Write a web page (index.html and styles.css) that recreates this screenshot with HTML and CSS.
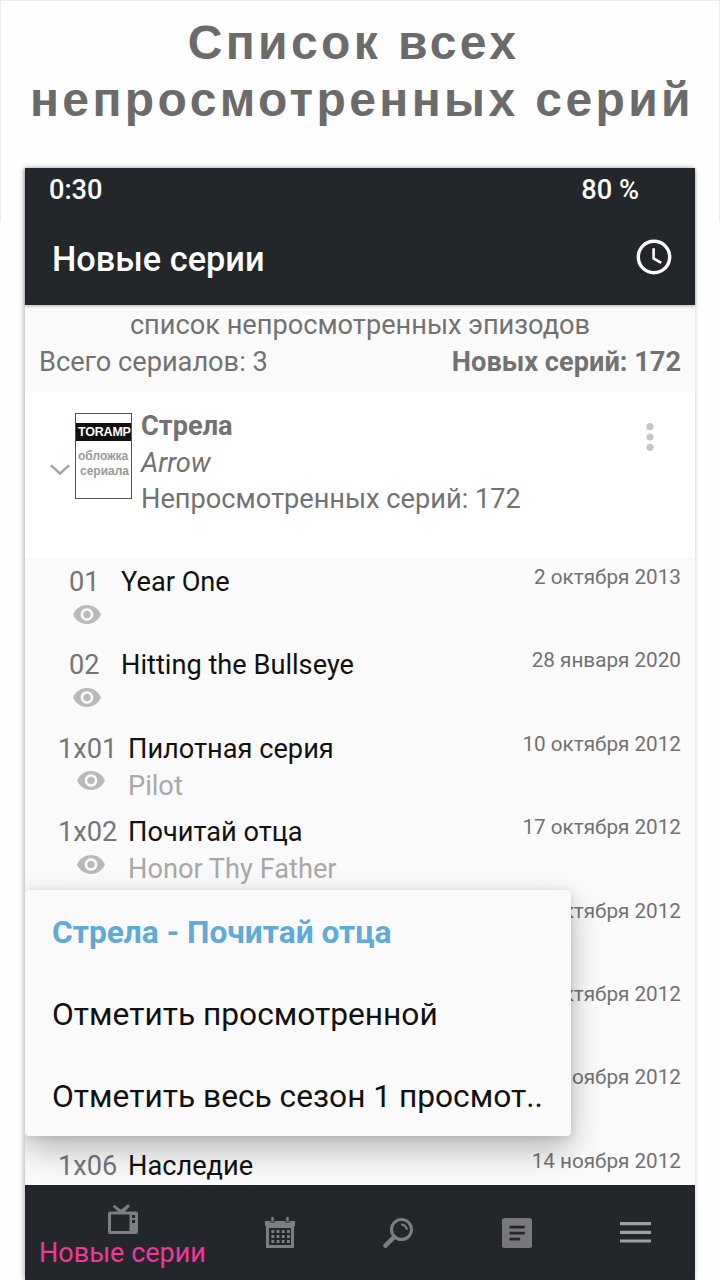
FILE: index.html
```html
<!DOCTYPE html>
<html lang="ru">
<head>
    <meta charset="UTF-8">
    <meta name="viewport" content="width=device-width, initial-scale=1.0">
    <title>Новые серии</title>
    <link rel="stylesheet" href="styles.css">
</head>
<body>
    <div class="frame"></div>
    <h1 class="headline">
        <div class="headline-first">Список всех</div>
        <div class="headline-second">непросмотренных серий</div>
    </h1>

    <div class="phone">
        <header class="header">
            <div class="status-bar">
                <span>0:30</span>
                <span class="battery">80 %</span>
            </div>
            <div class="toolbar">
                <span class="toolbar-title">Новые серии</span>
                <svg class="clock" viewBox="0 0 36 36" fill="none" stroke="#fff">
                    <circle cx="18" cy="18" r="15.7" stroke-width="3.4"/>
                    <path d="M17.6 9.2v10.3l7.6 4.4" stroke-width="2.6"/>
                </svg>
            </div>
        </header>

        <div class="summary">
            <div class="summary-title">список непросмотренных эпизодов</div>
            <div class="summary-row">
                <span>Всего сериалов: 3</span>
                <b>Новых серий: 172</b>
            </div>
        </div>

        <div class="series">
            <svg class="chevron" viewBox="0 0 20 12" fill="none" stroke="#a6a6a6" stroke-width="2.6">
                <path d="M0.8 1.2L10 9.4L19.2 1.2"/>
            </svg>
            <div class="poster">
                <div class="poster-logo">TORAMP</div>
                <div class="poster-text">обложка</div>
                <div class="poster-text poster-text-second">сериала</div>
            </div>
            <div class="series-info">
                <div class="series-name">Стрела</div>
                <div class="series-original">Arrow</div>
                <div class="series-count">Непросмотренных серий: 172</div>
            </div>
            <svg class="more" viewBox="0 0 8 28" fill="#c6c6c6">
                <circle cx="4" cy="3.7" r="3.6"/>
                <circle cx="4" cy="14" r="3.6"/>
                <circle cx="4" cy="24.3" r="3.6"/>
            </svg>
        </div>

        <div class="list">
            <svg width="0" height="0" class="defs">
                <symbol id="eye" viewBox="1 4.5 22 15">
                    <path d="M12 4.5C7 4.5 2.73 7.61 1 12c1.73 4.39 6 7.5 11 7.5s9.27-3.11 11-7.5c-1.73-4.39-6-7.5-11-7.5zM12 17c-2.76 0-5-2.24-5-5s2.24-5 5-5 5 2.24 5 5-2.24 5-5 5zm0-8c-1.66 0-3 1.34-3 3s1.34 3 3 3 3-1.34 3-3-1.34-3-3-3z"/>
                </symbol>
            </svg>
            <div class="episode special">
                <div class="number">01<svg class="eye"><use href="#eye"/></svg></div>
                <div class="names"><div class="name">Year One</div></div>
                <div class="date">2 октября 2013</div>
            </div>
            <div class="episode special">
                <div class="number">02<svg class="eye"><use href="#eye"/></svg></div>
                <div class="names"><div class="name">Hitting the Bullseye</div></div>
                <div class="date">28 января 2020</div>
            </div>
            <div class="episode">
                <div class="number">1x01<svg class="eye"><use href="#eye"/></svg></div>
                <div class="names"><div class="name">Пилотная серия</div><div class="original">Pilot</div></div>
                <div class="date">10 октября 2012</div>
            </div>
            <div class="episode">
                <div class="number">1x02<svg class="eye"><use href="#eye"/></svg></div>
                <div class="names"><div class="name">Почитай отца</div><div class="original">Honor Thy Father</div></div>
                <div class="date">17 октября 2012</div>
            </div>
            <div class="episode"><div class="date">октября 2012</div></div>
            <div class="episode"><div class="date">октября 2012</div></div>
            <div class="episode"><div class="date">ноября 2012</div></div>
            <div class="episode">
                <div class="number">1x06</div>
                <div class="names"><div class="name">Наследие</div></div>
                <div class="date">14 ноября 2012</div>
            </div>

            <div class="menu">
                <div class="menu-title">Стрела - Почитай отца</div>
                <div class="menu-item">Отметить просмотренной</div>
                <div class="menu-item">Отметить весь сезон 1 просмот..</div>
            </div>
        </div>

        <nav class="tabs">
            <div class="tab active">
                <svg class="icon" viewBox="0 0 30 30" fill="#7c7e80">
                    <path d="M4.500 2.500L6.500 1L13 5.800L20 .2L22 2L16.500 8H10.500z"/>
                    <path fill-rule="evenodd" d="M2 7.500H28Q30 7.500 30 9.500V28Q30 30 28 30H2Q0 30 0 28V9.500Q0 7.500 2 7.500zM3 10.500V27H21.500V10.500zM24 11V14H27V11zM24 16V19H27V16z"/>
                </svg>
                <span>Новые серии</span>
            </div>
            <div class="tab tab-calendar">
                <svg class="icon" viewBox="0 0 30 31" fill="#7c7e80">
                    <path fill-rule="evenodd" d="M0 4H5.500V5.500H9.500V4H20.500V5.500H24.500V4H30V9.500H29V31H1V9.500H0zM4 11V28H26V11z"/>
                    <rect x="6.300" y="0" width="2.400" height="4.600"/>
                    <rect x="21.300" y="0" width="2.400" height="4.600"/>
                    <path stroke="#7c7e80" stroke-width="2.800" stroke-dasharray="2.800 2.400" fill="none" d="M6.400 14.500H25M6.400 19.500H25M6.400 24.500H25"/>
                </svg>
            </div>
            <div class="tab">
                <svg class="icon" viewBox="0 0 30 30" fill="none" stroke="#7c7e80" stroke-linecap="round">
                    <circle cx="18.500" cy="11.600" r="10" stroke-width="3"/>
                    <path d="M2.500 27.600L11 19.200" stroke-width="4.600"/>
                    <path d="M18.800 6.400Q22.800 7.200 23.800 11" stroke-width="2"/>
                </svg>
            </div>
            <div class="tab">
                <svg class="icon" viewBox="0 0 30 30">
                    <rect width="30" height="30" rx="2.500" fill="#76787a"/>
                    <path d="M7.500 9.200H22.800M7.500 15.200H22.800M7.500 21.200H18.200" stroke="#23272b" stroke-width="2.800"/>
                </svg>
            </div>
            <div class="tab">
                <svg class="icon burger" viewBox="0 0 31 21">
                    <path d="M0 1.700H31M0 10.300H31M0 19H31" stroke="#9da0a2" stroke-width="3.200"/>
                </svg>
            </div>
        </nav>
    </div>
</body>
</html>
```

FILE: styles.css
```css
* {
    box-sizing: border-box;
}
body {
    margin: 0;
    width: 720px;
    height: 1280px;
    overflow: hidden;
    background: #fefefe;
    font-family: Roboto, sans-serif;
    font-size: 27.200px;
    color: #727272;
}
.frame {
    position: absolute;
    top: 0;
    left: 0;
    width: 720px;
    height: 222px;
    border: 1px solid #ececec;
    border-bottom: none;
}
.headline {
    margin: 0;
    height: 168px;
    padding-top: 14px;
    text-align: center;
    font-family: "Liberation Sans", Arial, sans-serif;
    font-size: 48px;
    line-height: 57px;
    font-weight: bold;
    letter-spacing: 3.4px;
    color: #6b6b6b;
    white-space: nowrap;
}
.headline-first {
    padding-right: 13px;
}
.headline-second {
    padding-left: 4px;
}
.phone {
    position: relative;
    margin-left: 25px;
    width: 670px;
    height: 1112px;
    display: flex;
    flex-direction: column;
    background: #fafafa;
    box-shadow: -1px 0 5px rgba(0, 0, 0, 0.3);
}
.header {
    height: 137px;
    background: #23272b;
    color: #fff;
    font-weight: 500;
    position: relative;
    box-shadow: 0 1px 3px rgba(0, 0, 0, 0.3);
}
.status-bar {
    display: flex;
    justify-content: space-between;
    height: 44px;
    line-height: 44px;
    padding: 0 56px 0 24px;
}
.toolbar {
    display: flex;
    justify-content: space-between;
    align-items: center;
    height: 92px;
    padding: 0 23px 0 27px;
}
.toolbar-title {
    font-size: 34.300px;
    padding-top: 2px;
}
.clock {
    width: 36px;
    height: 36px;
    margin-bottom: 2px;
}
.summary {
    height: 87px;
    padding: 2px 14px 0;
    line-height: 36.500px;
}
.summary-title {
    text-align: center;
}
.summary-row {
    display: flex;
    justify-content: space-between;
}
.series {
    display: flex;
    align-items: flex-start;
    height: 166px;
    padding: 15px 41px 0 25px;
    background: #fff;
}
.chevron {
    width: 20px;
    height: 12px;
    margin-top: 57px;
}
.poster {
    width: 57px;
    height: 86px;
    margin: 6px 9px 0 5px;
    padding-top: 9px;
    border: 1px solid #555;
    overflow: hidden;
    font-family: "Liberation Sans", Arial, sans-serif;
    font-weight: bold;
    white-space: nowrap;
}
.poster-logo {
    height: 18px;
    line-height: 19px;
    padding-left: 2px;
    background: #111;
    color: #fff;
    font-size: 12.500px;
    letter-spacing: -0.2px;
}
.poster-text {
    padding-left: 2px;
    margin-top: 8px;
    font-size: 12px;
    line-height: 15px;
    color: #999;
}
.poster-text-second {
    margin-top: 0;
    padding-left: 4px;
}
.series-info {
    flex: 1;
    padding-top: 1px;
    line-height: 36.500px;
}
.series-name {
    font-weight: bold;
}
.series-original {
    font-style: italic;
}
.more {
    width: 8px;
    height: 28px;
    margin-top: 16px;
}
.list {
    position: relative;
    flex: 1;
    overflow: hidden;
}
.defs {
    position: absolute;
}
.episode {
    display: flex;
    height: 83.400px;
    padding: 6px 14px 0 33px;
    line-height: 37px;
}
.number {
    width: 70px;
    color: #757575;
}
.special .number {
    width: 63px;
    padding-left: 11px;
}
.eye {
    display: block;
    width: 28px;
    height: 19px;
    margin: 3.500px 0 0 18.500px;
    fill: #b9b9b9;
}
.special .eye {
    margin-left: 4px;
}
.name {
    color: #111;
}
.original {
    color: #a8a8a8;
}
.date {
    margin-left: auto;
    font-size: 20.700px;
    line-height: 26px;
}
.menu {
    position: absolute;
    left: 0;
    top: 332px;
    width: 546px;
    height: 246px;
    border-radius: 4px;
    background: #fafafa;
    color: #111;
    font-size: 31.700px;
    line-height: 82px;
    padding: 2px 27px 0;
    white-space: nowrap;
    box-shadow: 0 14px 32px rgba(0, 0, 0, 0.26), 0 1px 8px rgba(0, 0, 0, 0.12);
}
.menu-title {
    font-weight: bold;
    color: #5faad6;
}
.tabs {
    display: flex;
    height: 95px;
    background: #23272b;
}
.tab {
    width: 118.700px;
    display: flex;
    flex-direction: column;
    align-items: center;
    justify-content: center;
}
.tab.active {
    width: 195px;
    justify-content: flex-start;
    padding-top: 19px;
    font-size: 27px;
    color: #f2389a;
    white-space: nowrap;
}
.tab.active span {
    line-height: 38px;
}
.tab-calendar {
    padding-left: 1px;
}
.icon {
    width: 30px;
    height: 30px;
}
.tab-calendar .icon {
    height: 31px;
}
.burger {
    width: 31px;
    height: 21px;
}
```
